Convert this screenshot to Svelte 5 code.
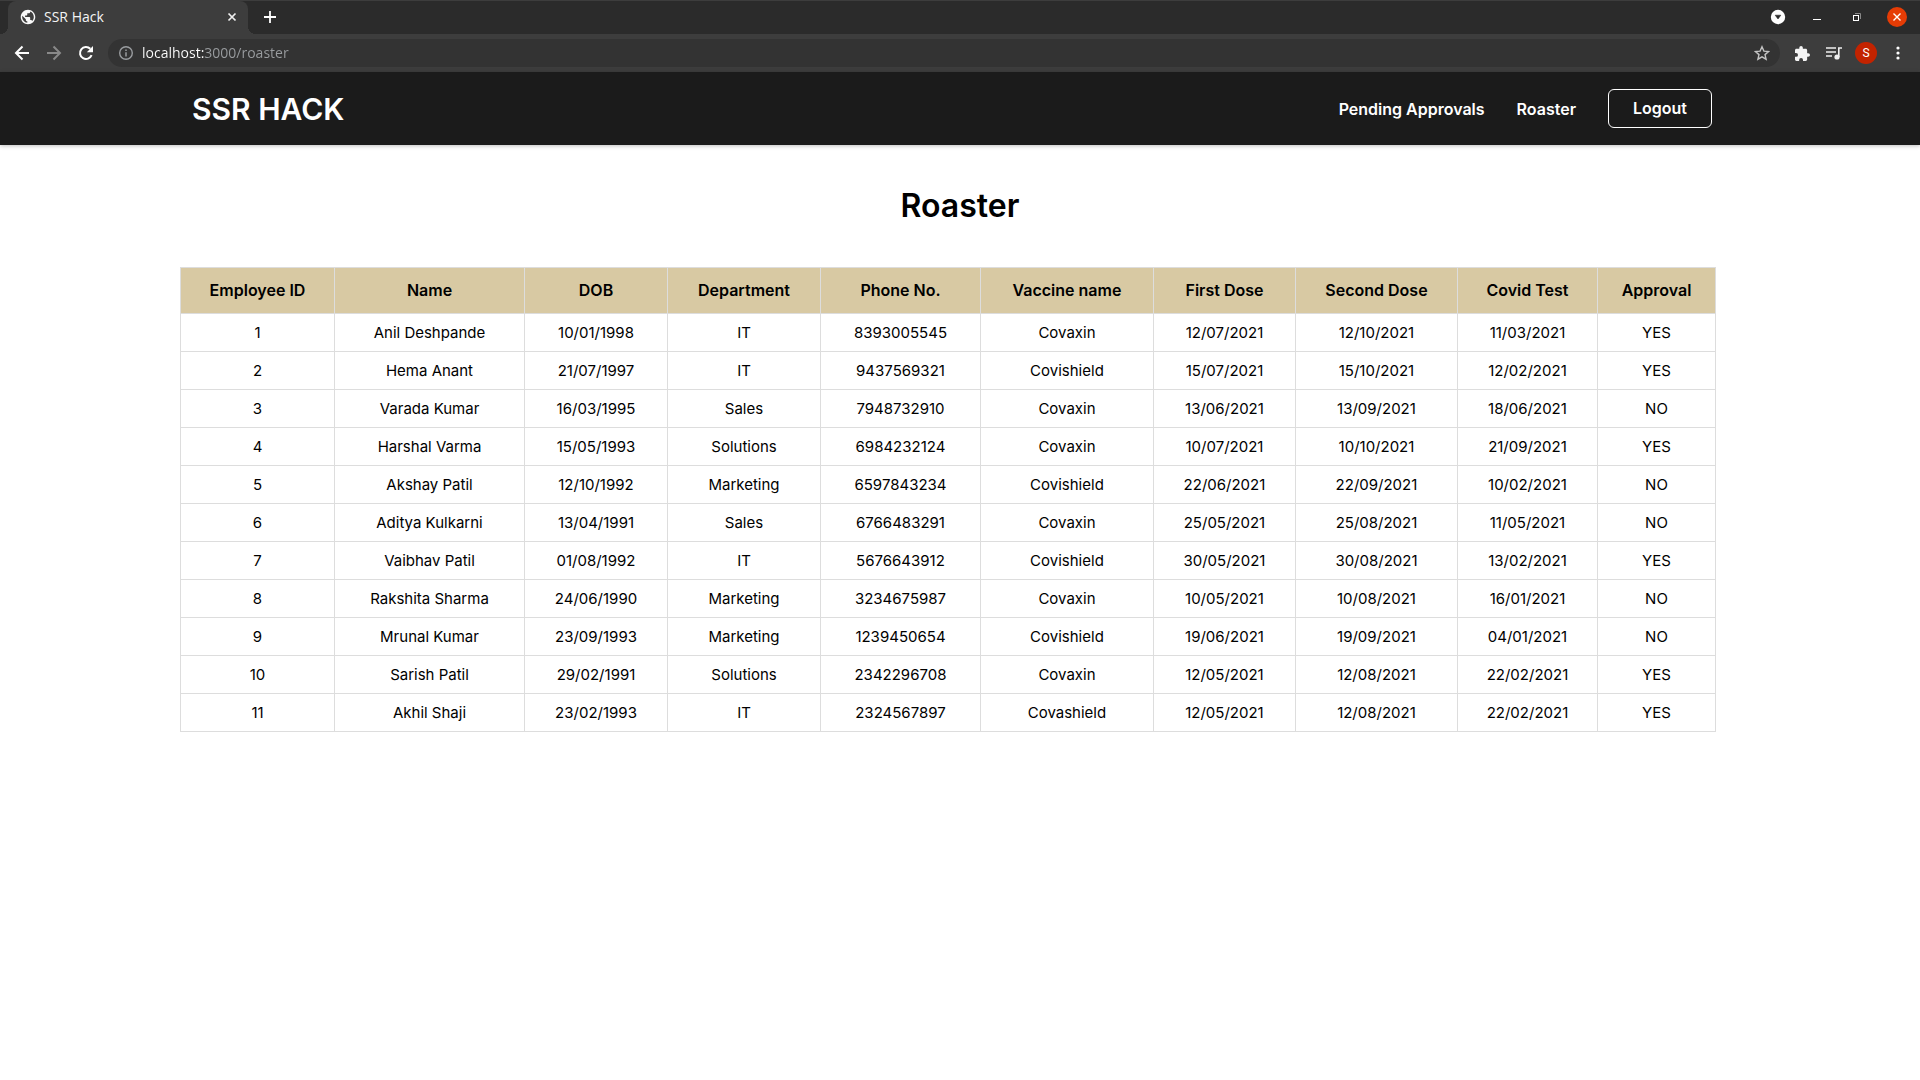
<script>
  const columns = [
    { label: 'Employee ID', width: 154 },
    { label: 'Name', width: 190 },
    { label: 'DOB', width: 143 },
    { label: 'Department', width: 153 },
    { label: 'Phone No.', width: 160 },
    { label: 'Vaccine name', width: 173 },
    { label: 'First Dose', width: 142 },
    { label: 'Second Dose', width: 162 },
    { label: 'Covid Test', width: 140 },
    { label: 'Approval', width: 118 }
  ];
  const total = columns.reduce((sum, c) => sum + c.width, 0);

  const rows = [
    ['1', 'Anil Deshpande', '10/01/1998', 'IT', '8393005545', 'Covaxin', '12/07/2021', '12/10/2021', '11/03/2021', 'YES'],
    ['2', 'Hema Anant', '21/07/1997', 'IT', '9437569321', 'Covishield', '15/07/2021', '15/10/2021', '12/02/2021', 'YES'],
    ['3', 'Varada Kumar', '16/03/1995', 'Sales', '7948732910', 'Covaxin', '13/06/2021', '13/09/2021', '18/06/2021', 'NO'],
    ['4', 'Harshal Varma', '15/05/1993', 'Solutions', '6984232124', 'Covaxin', '10/07/2021', '10/10/2021', '21/09/2021', 'YES'],
    ['5', 'Akshay Patil', '12/10/1992', 'Marketing', '6597843234', 'Covishield', '22/06/2021', '22/09/2021', '10/02/2021', 'NO'],
    ['6', 'Aditya Kulkarni', '13/04/1991', 'Sales', '6766483291', 'Covaxin', '25/05/2021', '25/08/2021', '11/05/2021', 'NO'],
    ['7', 'Vaibhav Patil', '01/08/1992', 'IT', '5676643912', 'Covishield', '30/05/2021', '30/08/2021', '13/02/2021', 'YES'],
    ['8', 'Rakshita Sharma', '24/06/1990', 'Marketing', '3234675987', 'Covaxin', '10/05/2021', '10/08/2021', '16/01/2021', 'NO'],
    ['9', 'Mrunal Kumar', '23/09/1993', 'Marketing', '1239450654', 'Covishield', '19/06/2021', '19/09/2021', '04/01/2021', 'NO'],
    ['10', 'Sarish Patil', '29/02/1991', 'Solutions', '2342296708', 'Covaxin', '12/05/2021', '12/08/2021', '22/02/2021', 'YES'],
    ['11', 'Akhil Shaji', '23/02/1993', 'IT', '2324567897', 'Covashield', '12/05/2021', '12/08/2021', '22/02/2021', 'YES']
  ];
</script>

<div class="browser">
  <div class="tabstrip">
    <div class="tab">
      <svg viewBox="1 1 22 22" width="16" height="16" aria-hidden="true">
        <path fill="#f8f8f8" d="M12 2C6.480 2 2 6.480 2 12s4.480 10 10 10 10-4.480 10-10S17.520 2 12 2zm-1 17.930c-3.950-.490-7-3.850-7-7.930 0-.620.080-1.210.210-1.790L9 15v1c0 1.100.900 2 2 2v1.930zm6.900-2.540c-.260-.810-1-1.390-1.900-1.390h-1v-3c0-.550-.450-1-1-1H8v-2h2c.550 0 1-.450 1-1V7h2c1.100 0 2-.900 2-2v-.410c2.930 1.190 5 4.060 5 7.410 0 2.080-.800 3.970-2.100 5.390z" />
      </svg>
      <span class="tab-title">SSR Hack</span>
      <button class="plain" aria-label="Close tab">
        <svg viewBox="0 0 10 10" width="10" height="10"><path d="M1.500 1.500l7 7M8.500 1.500l-7 7" stroke="#f0f0f0" stroke-width="1.700" /></svg>
      </button>
    </div>
    <button class="plain new-tab" aria-label="New tab">
      <svg viewBox="0 0 12 12" width="12" height="12"><path d="M6 0v12M0 6h12" stroke="#fff" stroke-width="1.800" /></svg>
    </button>
    <div class="window-buttons">
      <button class="plain" aria-label="Search tabs">
        <svg viewBox="0 0 16 16" width="16" height="16"><circle cx="8" cy="8" r="7.200" fill="#fff" /><path d="M5.200 6.200h5.600L8 10z" fill="#2b2b2b" stroke="#2b2b2b" stroke-width=".6" stroke-linejoin="round" /></svg>
      </button>
      <button class="plain" aria-label="Minimize">
        <svg viewBox="0 0 16 16" width="16" height="16"><path d="M4 10.500h8" stroke="#fff" /></svg>
      </button>
      <button class="plain" aria-label="Restore">
        <svg viewBox="0 0 16 16" width="16" height="16" fill="none"><path d="M7 4.500h5.500V10" stroke="#888" /><rect x="5.500" y="6.500" width="5" height="5" stroke="#fff" /></svg>
      </button>
      <button class="plain" aria-label="Close window">
        <svg viewBox="0 0 20 20" width="20" height="20"><circle cx="10" cy="10" r="10" fill="#e63c05" /><path d="M6.500 6.500l7 7M13.500 6.500l-7 7" stroke="#fff" stroke-width="1.400" /></svg>
      </button>
    </div>
  </div>

  <div class="toolbar">
    <button class="plain tool" aria-label="Back">
      <svg viewBox="0 0 16 16" width="16" height="16" fill="none" stroke="#fff" stroke-width="2"><path d="M15 8H2.500M8.500 1.500 2 8l6.500 6.500" /></svg>
    </button>
    <button class="plain tool" aria-label="Forward">
      <svg viewBox="0 0 16 16" width="16" height="16" fill="none" stroke="#898989" stroke-width="2"><path d="M1 8h12.500M7.500 1.500 14 8l-6.500 6.500" /></svg>
    </button>
    <button class="plain tool" aria-label="Reload">
      <svg viewBox="0 0 16 16" width="16" height="16"><path d="M13.600 10.200A6 6 0 1 1 12.300 3.800" fill="none" stroke="#fff" stroke-width="2" /><path d="M15 1v6.200H8.800z" fill="#fff" /></svg>
    </button>
    <div class="omnibox">
      <svg viewBox="0 0 16 16" width="16" height="16" fill="none" aria-hidden="true"><circle cx="8" cy="8" r="6.300" stroke="#9a9da0" stroke-width="1.400" /><path d="M8 7.200v4.200M8 4.500V6" stroke="#9a9da0" stroke-width="1.500" /></svg>
      <input class="url" type="text" aria-label="Address" value="localhost:3000/roaster" spellcheck="false" />
      <button class="plain" aria-label="Bookmark this page">
        <svg viewBox="0 0 16 16" width="16" height="16"><path d="M8 1.800l1.900 4.300 4.700.4-3.600 3.100 1.100 4.600L8 11.800l-4.100 2.400L5 9.600 1.400 6.500l4.700-.4z" fill="none" stroke="#c3c3c3" stroke-width="1.400" /></svg>
      </button>
    </div>
    <button class="plain tool" aria-label="Extensions">
      <svg viewBox="2 1 21 21" width="15" height="15"><path fill="#f4f4f4" d="M20.500 11H19V7c0-1.100-.9-2-2-2h-4V3.500a2.500 2.500 0 0 0-5 0V5H4c-1.100 0-2 .9-2 2v3.800h1.500a2.700 2.700 0 0 1 0 5.400H2V20c0 1.100.9 2 2 2h3.800v-1.500a2.700 2.700 0 0 1 5.400 0V22H17c1.100 0 2-.9 2-2v-4h1.500a2.500 2.500 0 0 0 0-5z" /></svg>
    </button>
    <button class="plain tool" aria-label="Media controls">
      <svg viewBox="0 0 16 16" width="16" height="16"><path d="M0 3h10M0 7h10M0 11h6" stroke="#eee" stroke-width="1.600" /><circle cx="11" cy="12" r="2.600" fill="#eee" /><path d="M12.800 12V3H16" fill="none" stroke="#eee" stroke-width="1.600" /></svg>
    </button>
    <button class="plain tool" aria-label="Profile"><span class="avatar">S</span></button>
    <button class="plain tool" aria-label="Menu">
      <svg viewBox="0 0 16 16" width="16" height="16" fill="#fff"><circle cx="8" cy="3" r="1.600" /><circle cx="8" cy="8" r="1.600" /><circle cx="8" cy="13" r="1.600" /></svg>
    </button>
  </div>
</div>

<header class="site-header">
  <a class="brand" href="#home">SSR HACK</a>
  <nav>
    <a href="#pending">Pending Approvals</a>
    <a href="#roaster">Roaster</a>
    <button class="logout">Logout</button>
  </nav>
</header>

<main>
  <h1>Roaster</h1>
  <table>
    <colgroup>
      {#each columns as column}
        <col style:width="{(column.width / total) * 100}%" />
      {/each}
    </colgroup>
    <thead>
      <tr>
        {#each columns as column}
          <th scope="col">{column.label}</th>
        {/each}
      </tr>
    </thead>
    <tbody>
      {#each rows as row}
        <tr>
          {#each row as cell}
            <td>{cell}</td>
          {/each}
        </tr>
      {/each}
    </tbody>
  </table>
</main>

<style>
  :global(body) {
    margin: 0;
    background: #fff;
    color: #000;
    font-family: Inter, 'Liberation Sans', sans-serif;
    font-size: 15px;
  }

  a {
    color: inherit;
    text-decoration: none;
  }

  .plain {
    display: grid;
    place-items: center;
    flex: none;
    padding: 0;
    border: 0;
    background: none;
    color: inherit;
    font: inherit;
  }

  svg {
    display: block;
  }

  .browser {
    font-family: 'Open Sans', 'Noto Sans', sans-serif;
    font-size: 14px;
    color: #f4f4f4;
    background: #3d3d3d;
  }

  .tabstrip {
    display: flex;
    align-items: stretch;
    height: 34px;
    padding-left: 8px;
    box-sizing: border-box;
    background: #2b2b2b;
    border-top: 1px solid #3d3d3d;
  }

  .tab {
    position: relative;
    display: flex;
    align-items: center;
    width: 240px;
    box-sizing: border-box;
    padding: 0 11px 2px 12px;
    gap: 8px;
    background: #3d3d3d;
    border-radius: 8px 8px 0 0;
  }

  /* Concave feet where the tab meets the toolbar */
  .tab::before,
  .tab::after {
    content: '';
    position: absolute;
    bottom: 0;
    width: 8px;
    height: 8px;
  }

  .tab::before {
    right: 100%;
    background: radial-gradient(circle at 0 0, transparent 8px, #3d3d3d 8px);
  }

  .tab::after {
    left: 100%;
    background: radial-gradient(circle at 100% 0, transparent 8px, #3d3d3d 8px);
  }

  .tab-title {
    flex: 1;
    line-height: 18px;
  }

  .new-tab {
    width: 44px;
    padding-bottom: 1px;
  }

  .window-buttons {
    display: flex;
    align-items: center;
    gap: 23px;
    margin-left: auto;
    padding: 0 13px 1px 0;
  }

  .toolbar {
    display: flex;
    align-items: center;
    height: 38px;
    padding: 0 6px;
  }

  .tool {
    width: 32px;
    height: 32px;
  }

  .omnibox {
    display: flex;
    align-items: center;
    flex: 1;
    gap: 8px;
    height: 28px;
    margin: 0 6px;
    padding: 0 10px;
    box-sizing: border-box;
    border-radius: 14px;
    background: #333;
  }

  /* The host part of the address is brighter than the rest */
  .url {
    flex: 1;
    min-width: 0;
    padding: 0 0 2px;
    border: 0;
    outline: 0;
    background: linear-gradient(90deg, #fff 62px, #9a9da0 62px);
    background-clip: text;
    -webkit-background-clip: text;
    color: transparent;
    font: inherit;
  }

  .avatar {
    width: 22px;
    border-radius: 50%;
    background: #c32300;
    color: #fff;
    font-family: Roboto, sans-serif;
    font-size: 12px;
    line-height: 22px;
  }

  .site-header {
    display: flex;
    align-items: center;
    justify-content: space-between;
    padding: 17px 208px 17px 192px;
    background: #1b1b1b;
    color: #fff;
    box-shadow: 0 1px 4px rgba(0, 0, 0, 0.25);
  }

  .brand {
    font-size: 30px;
    font-weight: 600;
    line-height: 36px;
  }

  nav {
    display: flex;
    align-items: center;
    gap: 32px;
    font-size: 16px;
    font-weight: 600;
  }

  .logout {
    padding: 9px 24px;
    border: 1px solid #fff;
    border-radius: 6px;
    background: none;
    color: inherit;
    font: inherit;
    line-height: 19px;
  }

  h1 {
    margin: 40px 0;
    font-size: 32px;
    font-weight: 600;
    line-height: 42px;
    text-align: center;
  }

  table {
    width: 80%;
    margin-left: 180px;
    table-layout: fixed;
    border-collapse: collapse;
    text-align: center;
    line-height: 21px;
  }

  th,
  td {
    padding: 8px 0;
    border: 1px solid #ddd;
    font-weight: 400;
  }

  th {
    padding: 12px 0;
    background: #d8c9a3;
    font-size: 16px;
    font-weight: 600;
  }
</style>
